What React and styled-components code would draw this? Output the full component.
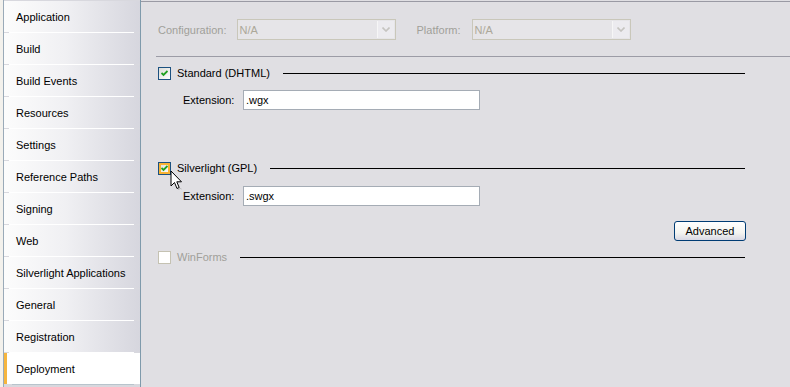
import React from 'react';
import styled, { createGlobalStyle } from 'styled-components';

const GlobalStyle = createGlobalStyle`
  html, body {
    margin: 0;
    padding: 0;
    background: #e0dfe3;
    font-family: "Liberation Sans", Arial, sans-serif;
    font-size: 11px;
    color: #000;
  }
`;

const Page = styled.div`
  display: flex;
  width: 790px;
  height: 387px;
  overflow: hidden;
  position: relative;
`;

const Sidebar = styled.div`
  width: 138px;
  flex-shrink: 0;
  padding-left: 3px;
  background: #f3f1ec;
  display: flex;
  flex-direction: column;
`;

const Tabs = styled.div`
  flex: 1;
  padding-top: 1px;
  border-left: 1px solid #9aaab8;
  border-right: 1px solid #7f9aab;
  display: flex;
  flex-direction: column;
  background: #d8d8de;
`;

const Tab = styled.div`
  height: 31px;
  flex-shrink: 0;
  display: flex;
  align-items: center;
  padding-left: ${p => (p.$active ? '9px' : '12px')};
  position: relative;
  background: ${p =>
    p.$active ? '#ffffff' : 'linear-gradient(to right, #fcfcfc 0%, #f0f0f3 45%, #d6d6de 100%)'};
  border-left: ${p => (p.$active ? '3px solid #f6b53e' : 'none')};
  &::after {
    content: '';
    position: absolute;
    left: 5px;
    right: 6px;
    bottom: -1px;
    height: 1px;
    background: ${p => (p.$active ? '#b8c4cc' : '#ffffff')};
  }
  margin-bottom: 1px;
`;

const Main = styled.div`
  flex: 1;
  border-top: 1px solid #9a9aa4;
  margin-top: 1px;
  display: flex;
  flex-direction: column;
`;

const TopBar = styled.div`
  height: 53px;
  margin-left: 15px;
  border-bottom: 1px solid #9c9ca6;
  display: flex;
  align-items: center;
  padding-left: 2px;
  padding-top: 1px;
`;

const DimLabel = styled.span`
  color: #a09f9a;
  margin-right: ${p => p.$gap || 0}px;
`;

const Combo = styled.div`
  width: 157px;
  height: 19px;
  border: 1px solid #c9c7ba;
  background: #e6e5e8;
  display: flex;
  align-items: center;
  margin-right: ${p => p.$gap || 0}px;
  span {
    flex: 1;
    padding-left: 2px;
    color: #aca899;
  }
`;

const ComboButton = styled.div`
  width: 16px;
  height: 17px;
  margin-right: 1px;
  background: #ecebef;
  border-left: 1px solid #f6f6f6;
  display: flex;
  align-items: center;
  justify-content: center;
`;

const Content = styled.div`
  padding: 9px 45px 0 17px;
  display: flex;
  flex-direction: column;
`;

const Header = styled.div`
  display: flex;
  align-items: center;
  height: 14px;
  margin-top: ${p => p.$top || 0}px;
`;

const HeaderLabel = styled.span`
  margin-left: 6px;
  margin-right: 13px;
  color: ${p => (p.$disabled ? '#a09f9a' : '#000')};
`;

const Rule = styled.div`
  flex: 1;
  height: 1px;
  background: #000;
`;

const Box = styled.div`
  width: 11px;
  height: 11px;
  border: 1px solid ${p => (p.$disabled ? '#c5c2b2' : '#1c5180')};
  background: ${p =>
    p.$disabled ? '#ffffff' : 'linear-gradient(135deg, #dcdcd6 0%, #ffffff 100%)'};
  box-shadow: ${p => (p.$hover ? 'inset 0 0 0 2px #f8b334' : 'none')};
  display: flex;
  align-items: center;
  justify-content: center;
`;

const FieldRow = styled.div`
  display: flex;
  align-items: center;
  padding-left: 25px;
  margin-top: ${p => p.$top || 0}px;
  label {
    width: 60px;
  }
`;

const TextInput = styled.div`
  width: 233px;
  height: 18px;
  border: 1px solid #a5acb5;
  background: #ffffff;
  display: flex;
  align-items: center;
  padding-left: 2px;
`;

const ButtonRow = styled.div`
  display: flex;
  justify-content: flex-end;
  margin-top: 15px;
  margin-right: -1px;
`;

const Button = styled.button`
  width: 72px;
  height: 20px;
  border: 1px solid #003c74;
  border-radius: 3px;
  background: linear-gradient(to bottom, #ffffff 0%, #f4f4f0 60%, #d8d8e4 100%);
  font-family: "Liberation Sans", Arial, sans-serif;
  font-size: 11px;
  color: #000;
  padding: 0;
`;

const Cursor = styled.svg`
  position: absolute;
  left: 170px;
  top: 170px;
`;

const tabs = [
  'Application',
  'Build',
  'Build Events',
  'Resources',
  'Settings',
  'Reference Paths',
  'Signing',
  'Web',
  'Silverlight Applications',
  'General',
  'Registration',
  'Deployment',
];

function Check({ checked, hover, disabled }) {
  return (
    <Box $hover={hover} $disabled={disabled}>
      {checked && (
        <svg width="7" height="7" viewBox="0 0 7 7">
          <path d="M0.5 3 L2.5 5 L6.5 1" stroke="#21a121" strokeWidth="1.8" fill="none" />
        </svg>
      )}
    </Box>
  );
}

function Chevron() {
  return (
    <svg width="8" height="5" viewBox="0 0 8 5">
      <path d="M0.5 0.5 L4 4 L7.5 0.5" stroke="#c5c4c0" strokeWidth="1.6" fill="none" />
    </svg>
  );
}

export default function App() {
  return (
    <Page>
      <GlobalStyle />
      <Sidebar>
        <Tabs>
          {tabs.map(t => (
            <Tab key={t} $active={t === 'Deployment'}>
              {t}
            </Tab>
          ))}
        </Tabs>
      </Sidebar>
      <Main>
        <TopBar>
          <DimLabel $gap={10}>Configuration:</DimLabel>
          <Combo $gap={21}>
            <span>N/A</span>
            <ComboButton>
              <Chevron />
            </ComboButton>
          </Combo>
          <DimLabel $gap={11}>Platform:</DimLabel>
          <Combo>
            <span>N/A</span>
            <ComboButton>
              <Chevron />
            </ComboButton>
          </Combo>
        </TopBar>
        <Content>
          <Header>
            <Check checked />
            <HeaderLabel>Standard (DHTML)</HeaderLabel>
            <Rule />
          </Header>
          <FieldRow $top={10}>
            <label>Extension:</label>
            <TextInput>.wgx</TextInput>
          </FieldRow>
          <Header $top={51}>
            <Check checked hover />
            <HeaderLabel>Silverlight (GPL)</HeaderLabel>
            <Rule />
          </Header>
          <FieldRow $top={11}>
            <label>Extension:</label>
            <TextInput>.swgx</TextInput>
          </FieldRow>
          <ButtonRow>
            <Button>Advanced</Button>
          </ButtonRow>
          <Header $top={9}>
            <Check disabled />
            <HeaderLabel $disabled>WinForms</HeaderLabel>
            <Rule />
          </Header>
        </Content>
      </Main>
      <Cursor width="14" height="22" viewBox="0 0 14 22">
        <path d="M1 1 L1 16 L4.5 12.5 L7 18.5 L9.2 17.5 L6.8 11.8 L11.5 11.8 Z" fill="#fff" stroke="#000" strokeWidth="1" strokeLinejoin="round" />
        <path d="M8 19.5 L10.5 18.5 L11.5 19" stroke="#9a9a9a" strokeWidth="1" fill="none" opacity="0.6" />
      </Cursor>
    </Page>
  );
}
